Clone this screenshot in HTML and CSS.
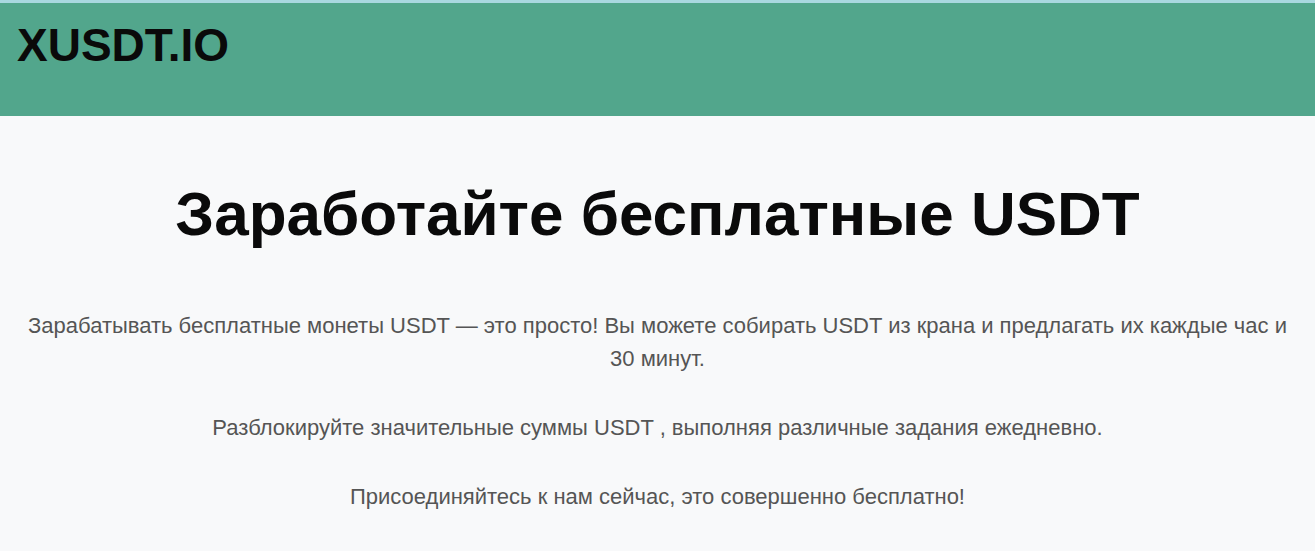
FILE: index.html
```html
<!doctype html>
<html lang="ru">
    <head>
        <title>XUSDT.IO</title>
        <meta charset="UTF-8"/>
        <link rel="stylesheet" href="styles.css">
    </head>
    <body>
        <header class="site-header">
            <div class="logo">XUSDT.IO</div>
        </header>
        <main class="hero">
            <h1>Заработайте бесплатные USDT</h1>
            <p>Зарабатывать бесплатные монеты USDT — это просто! Вы можете собирать USDT из крана и предлагать их каждые час и 30 минут.</p>
            <p>Разблокируйте значительные суммы USDT , выполняя различные задания ежедневно.</p>
            <p>Присоединяйтесь к нам сейчас, это совершенно бесплатно!</p>
        </main>
    </body>
</html>
```

FILE: styles.css
```css
body {
    margin: 0;
    font-family: "Liberation Sans", Arial, sans-serif;
    background-color: #f8f9fa;
    color: #555555;
}
.site-header {
    height: 113px;
    background-color: #52a68c;
    border-top: 3px solid #a9d8e0;
    padding: 0 17px;
}
.logo {
    padding-top: 16px;
    font-size: 46px;
    line-height: 52px;
    font-weight: bold;
    color: #0a0a0a;
}
.hero {
    padding: 58px 22px 0;
    text-align: center;
}
.hero h1 {
    margin: 0 0 55px;
    font-size: 62px;
    line-height: 80px;
    font-weight: bold;
    color: #0a0a0a;
}
.hero p {
    margin: 0 0 36px;
    font-size: 22px;
    line-height: 33px;
}
```
